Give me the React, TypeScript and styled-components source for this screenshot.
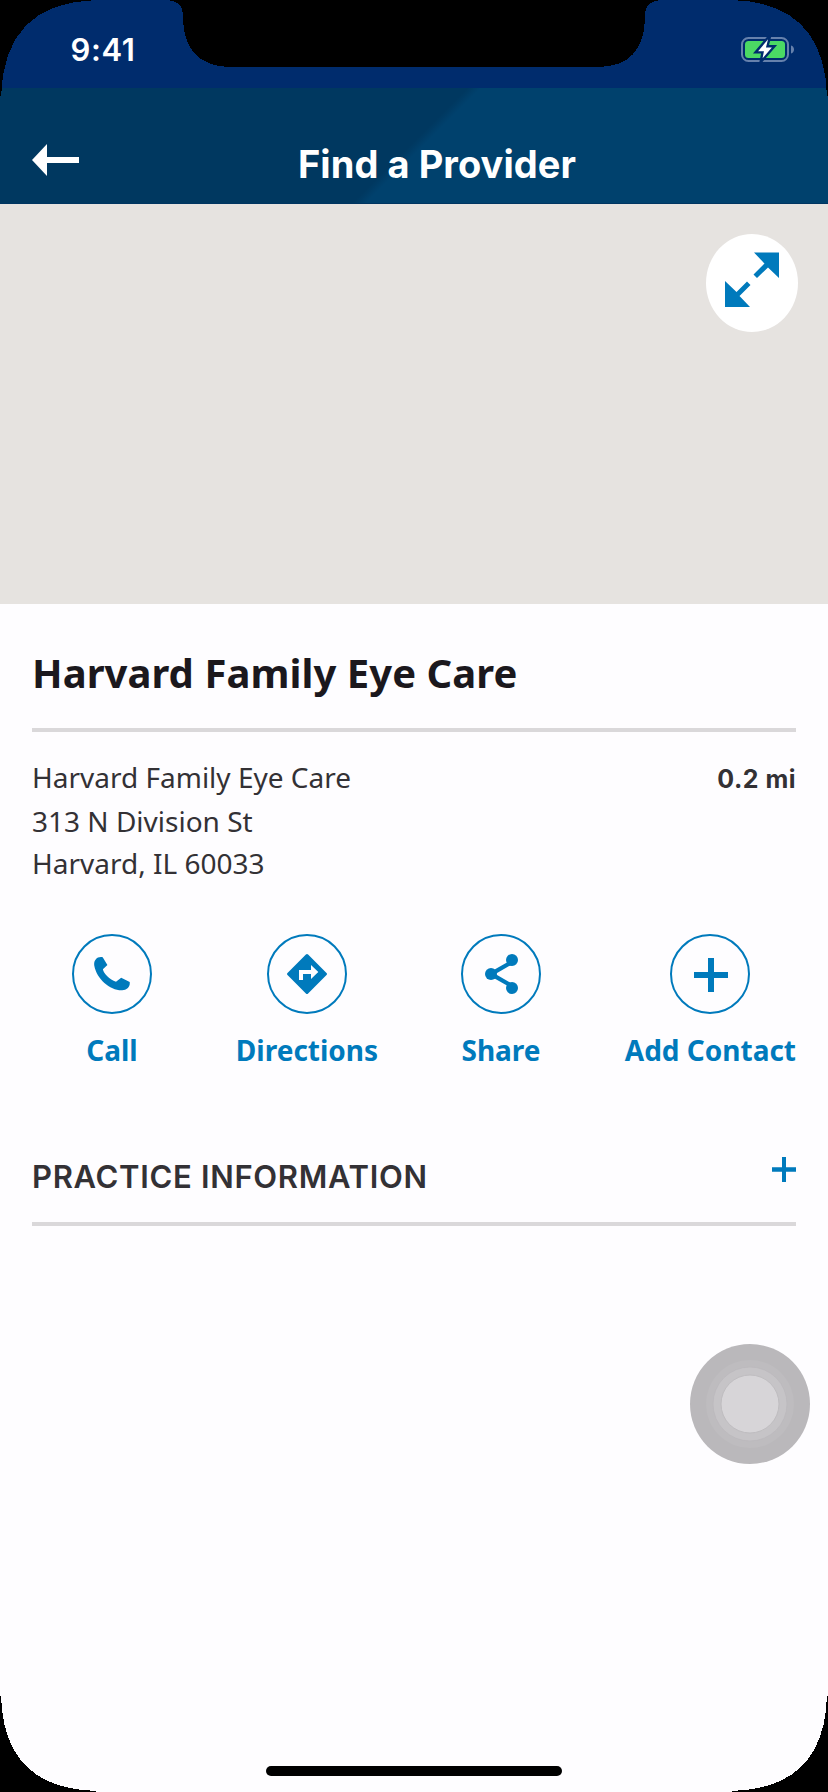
import React from "react";
import styled, { createGlobalStyle } from "styled-components";

const BLUE = "#007abc";

const GlobalStyle = createGlobalStyle`
  *, *::before, *::after { box-sizing: border-box; }
  body { margin: 0; background: #000; }
  button { border: 0; padding: 0; background: none; font: inherit; color: inherit; }
`;

const Screen = styled.div`
  position: relative;
  display: flex;
  flex-direction: column;
  width: 828px;
  height: 1792px;
  overflow: hidden;
  background: #fefdff;
  font-family: "Noto Sans", sans-serif;
  color: #333135;
`;

const Bezel = styled.svg`
  position: absolute;
  inset: 0;
  width: 828px;
  height: 1792px;
  pointer-events: none;
`;

const StatusBar = styled.div`
  display: flex;
  justify-content: space-between;
  height: 88px;
  padding: 28px 33px 0 70.5px;
  background: #002c6d;
`;

const Time = styled.span`
  font: 600 31px/44px Inter, sans-serif;
  letter-spacing: 0.6px;
  color: #fff;
`;

const BatteryIcon = styled.svg`
  width: 54px;
  height: 30px;
  margin-top: 6px;
`;

const Header = styled.header`
  display: grid;
  grid-template-columns: 100px 1fr 86px;
  height: 116px;
  padding: 0 0 0 32px;
  background: linear-gradient(135deg, #003860 0, #003860 49.6%, #00416d 51%, #00416d 100%);
  border-bottom: 1px solid #003561;
`;

const BackButton = styled.button`
  display: flex;
  align-items: flex-start;
  padding-top: 56px;
`;

const HeaderTitle = styled.h1`
  margin: 0;
  padding-top: 52px;
  text-align: center;
  font: 700 38px/48px Inter, sans-serif;
  letter-spacing: 0.05px;
  color: #fff;
`;

const MapArea = styled.div`
  display: flex;
  justify-content: flex-end;
  height: 400px;
  padding: 30px 30px 0 0;
  background: #e6e3e0;
`;

const ExpandButton = styled.button`
  display: flex;
  align-items: center;
  justify-content: center;
  width: 92px;
  height: 98px;
  padding-bottom: 6px;
  border-radius: 46px / 49px;
  background: #fff;
`;

const Details = styled.main`
  display: flex;
  flex-direction: column;
  padding: 39px 32px 0;
`;

const ProviderName = styled.h2`
  margin: 0;
  height: 85px;
  font-size: 40px;
  font-weight: 700;
  line-height: 60px;
  letter-spacing: 0.05px;
  color: #1b181d;
`;

const Divider = styled.hr`
  width: 100%;
  height: 4px;
  margin: 0;
  border: 0;
  background: #dad8da;
`;

const AddressRow = styled.div`
  display: flex;
  justify-content: space-between;
  padding-top: 24px;
`;

const Address = styled.address`
  display: flex;
  flex-direction: column;
  font-size: 28px;
  font-style: normal;
`;

const AddressLine = styled.span<{ $height?: number }>`
  height: ${(p) => p.$height ?? 43}px;
  line-height: 43px;
`;

const Distance = styled.span`
  padding-top: 2px;
  font: 700 25px/43px Inter, sans-serif;
  letter-spacing: 0.5px;
`;

const Actions = styled.div`
  display: grid;
  grid-template-columns: 160px 230px 158px 216px;
  margin-top: 49px;
`;

const Action = styled.button<{ $align?: string }>`
  display: flex;
  flex-direction: column;
  align-items: center;
  justify-self: ${(p) => p.$align ?? "center"};
  gap: 16px;
  color: ${BLUE};
`;

const ActionCircle = styled.span`
  display: flex;
  align-items: center;
  justify-content: center;
  width: 80px;
  height: 80px;
  border: 2px solid ${BLUE};
  border-radius: 50%;
`;

const ActionLabel = styled.span`
  font-size: 28px;
  font-weight: 700;
  line-height: 40px;
  white-space: nowrap;
`;

const Section = styled.section`
  display: flex;
  justify-content: space-between;
  height: 84px;
  margin-top: 68px;
`;

const SectionTitle = styled.h3`
  margin: 0;
  padding-top: 19px;
  font: 600 31px/40px Inter, sans-serif;
  letter-spacing: 0.68px;
`;

const SectionPlus = styled.svg`
  width: 24px;
  height: 25px;
  margin-top: 19px;
`;

const TouchButton = styled.div`
  position: absolute;
  left: 690px;
  top: 1344px;
  width: 120px;
  height: 120px;
`;

const HomeIndicator = styled.div`
  width: 296px;
  height: 10px;
  margin: auto auto 16px;
  border-radius: 5px;
  background: #000;
`;

const Call = () => (
  <svg width="36" height="34" viewBox="0 0 36 34" fill={BLUE}>
    <path d="M1.7 2.4C3.3.5 6-.3 8.7.3L13.4 8 8.9 12.2C9.6 16.8 15.6 22.3 22 24.7L27.2 20.8 35.7 25.1C36.4 29.6 32.8 33 28.2 33.2 16.4 33.7 2.8 22.2.3 8.7-.1 6.1.3 4 1.7 2.4Z" />
  </svg>
);

const Directions = () => (
  <svg width="40" height="40" viewBox="0 0 40 40" fill={BLUE}>
    <path
      fillRule="evenodd"
      d="M18.9.5Q20-.5 21.1.5L39.5 18.9Q40.5 20 39.5 21.1L21.1 39.5Q20 40.5 18.9 39.5L.5 21.1Q-.5 20 .5 18.9ZM12 16V26H16V20H24V25L31.3 18 24 11V16Z"
    />
  </svg>
);

const Share = () => (
  <svg width="36" height="40" viewBox="0 0 36 40" fill={BLUE}>
    <path d="M29 6 8 20 29 34" transform="matrix(1 0 0 .86 0 2.8)" fill="none" stroke={BLUE} strokeWidth="4.8" />
    <circle cx="29" cy="6" r="6" />
    <circle cx="8" cy="20" r="6" />
    <circle cx="29" cy="34" r="6" />
  </svg>
);

const Plus = () => (
  <svg width="36" height="36" viewBox="0 0 36 36" fill={BLUE}>
    <path d="M16 2h6v14h14v6H22v14h-6V22H2v-6h14z" />
  </svg>
);

const actions = [
  { label: "Call", icon: <Call /> },
  { label: "Directions", icon: <Directions /> },
  { label: "Share", icon: <Share /> },
  { label: "Add Contact", icon: <Plus />, align: "end" },
];

export default function App() {
  return (
    <>
      <GlobalStyle />
      <Screen>
        <StatusBar>
          <Time>9:41</Time>
          <BatteryIcon viewBox="0 0 54 30">
            <rect x="1" y="4" width="46" height="23" rx="6.5" fill="none" stroke="#6681ac" strokeWidth="2" />
            <path d="M50 11.5c4 1 4 7 0 8z" fill="#6681ac" />
            <rect x="4" y="7" width="40" height="17" rx="3.5" fill="#4bd964" />
            <path d="M27 3.5 14.5 18.4H21.5L19.5 28.5 33.5 12.2H26.5L29 2.5Z" fill="#fff" stroke="#002c6d" strokeWidth="2.4" />
          </BatteryIcon>
        </StatusBar>
        <Header>
          <BackButton aria-label="Back">
            <svg width="47" height="32" viewBox="0 0 47 32" fill="#fff">
              <path d="M0 16 15 0v13h32v6H15v13z" />
            </svg>
          </BackButton>
          <HeaderTitle>Find a Provider</HeaderTitle>
        </Header>
        <MapArea>
          <ExpandButton aria-label="Expand map">
            <svg width="56" height="56" viewBox="0 0 56 56" fill={BLUE}>
              <path d="M30 0.5H55V26L44 15.5 33 26 29.5 22.5 40.5 11.5Z" />
              <path d="M26 55H1V29L12.5 40 23 29.5 26.5 33 15.5 44Z" />
            </svg>
          </ExpandButton>
        </MapArea>
        <Details>
          <ProviderName>Harvard Family Eye Care</ProviderName>
          <Divider />
          <AddressRow>
            <Address>
              <AddressLine $height={44}>Harvard Family Eye Care</AddressLine>
              <AddressLine $height={42}>313 N Division St</AddressLine>
              <AddressLine>Harvard, IL 60033</AddressLine>
            </Address>
            <Distance>0.2 mi</Distance>
          </AddressRow>
          <Actions>
            {actions.map((a) => (
              <Action key={a.label} $align={a.align}>
                <ActionCircle>{a.icon}</ActionCircle>
                <ActionLabel>{a.label}</ActionLabel>
              </Action>
            ))}
          </Actions>
          <Section>
            <SectionTitle>PRACTICE INFORMATION</SectionTitle>
            <SectionPlus viewBox="0 0 24 25" fill={BLUE}>
              <path d="M10 0h4v10.3h10v4.4H14V25h-4V14.7H0v-4.4h10z" />
            </SectionPlus>
          </Section>
          <Divider />
        </Details>
        <HomeIndicator />
        <TouchButton>
          <svg width="120" height="120" viewBox="0 0 120 120">
            <circle cx="60" cy="60" r="60" fill="#bab8bb" />
            <circle cx="60" cy="60" r="44" fill="#bebcbf" />
            <circle cx="60" cy="60" r="37" fill="#c6c4c7" stroke="#bab8bb" strokeWidth="0.7" />
            <circle cx="60" cy="60" r="29" fill="#d7d5d8" stroke="#bfbdc0" strokeWidth="1" />
          </svg>
        </TouchButton>
        <Bezel viewBox="0 0 828 1792" fill="#000" shapeRendering="crispEdges">
          <path d="M0 0H96C34 2 3 34 1 96H0Z" />
          <path d="M828 0H732C794 2 825 34 827 96H828Z" />
          <path d="M0 1792H96V1791C34 1789 3 1758 1 1696H0Z" />
          <path d="M828 1792H732V1791C794 1789 825 1758 827 1696H828Z" />
          <path d="M166 0C179 1 183 6 183 17C183 49 199 67 231 67H598C629 67 645 49 645 17C645 6 649 1 662 0Z" />
        </Bezel>
      </Screen>
    </>
  );
}
